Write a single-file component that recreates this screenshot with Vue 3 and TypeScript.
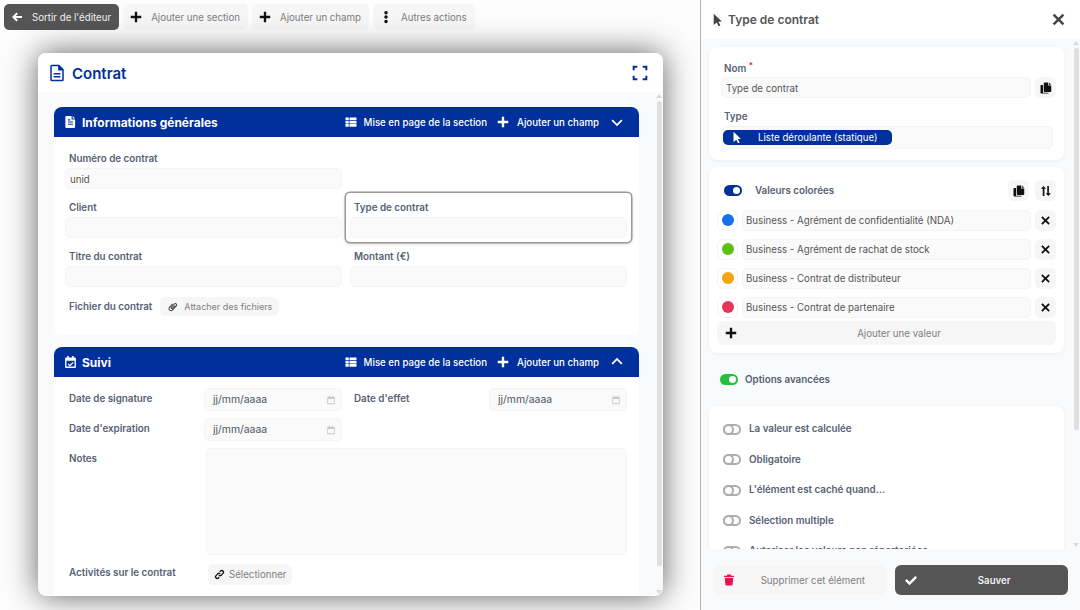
<script setup lang="ts">
import { h } from 'vue';
import type { FunctionalComponent } from 'vue';

// FontAwesome-like solid glyphs, drawn on a 24px box
const paths: Record<string, string> = {
  arrowLeft: 'M11 3l2.800 2.800L9.200 10H22v4H9.200l4.600 4.200L11 21 2 12z',
  plus: 'M10 3h4v7h7v4h-7v7h-4v-7H3v-4h7z',
  dots: 'M12 1.500a3 3 0 110 6 3 3 0 010-6zm0 7.500a3 3 0 110 6 3 3 0 010-6zm0 7.500a3 3 0 110 6 3 3 0 010-6z',
  fileLine: 'M5 1h10l6 6v14a2 2 0 01-2 2H5a2 2 0 01-2-2V3a2 2 0 012-2zm0 2v18h14V8.500h-5.500V3zM7.500 12h9v2h-9zm0 4h9v2h-9z',
  fileSolid: 'M4.500 1H14v6.500h6.500V21a2 2 0 01-2 2h-14a2 2 0 01-2-2V3a2 2 0 012-2zM16 1l4.500 4.500H16zM7.500 11v2h9v-2zm0 4v2h9v-2zm0-8v2h4V7z',
  table: 'M1 3h6.500v5.500H1zM9 3h14v5.500H9zM1 9.800h6.500v5H1zM9 9.800h14v5H9zM1 16h6.500v5.500H1zM9 16h14v5.500H9z',
  chevronDown: 'M3.500 7L12 15.300 20.500 7l2.500 2.600L12 20.500 1 9.600z',
  chevronUp: 'M3.500 17L12 8.700 20.500 17l2.500-2.600L12 3.500 1 14.400z',
  expand: 'M1 1h7v3H4v4H1zm15 0h7v7h-3V4h-4zM1 16h3v4h4v3H1zm19 0h3v7h-7v-3h4z',
  calendarCheck: 'M6 1h3v2.500h6V1h3v2.500h2A2 2 0 0122 5.500V21a2 2 0 01-2 2H4a2 2 0 01-2-2V5.500a2 2 0 012-2h2zM4.500 9.500V20.500h15V9.500zm11.900 2.300l1.500 1.500-7 7-4-4 1.500-1.500 2.500 2.500z',
  calendar: 'M7 2h2v2h6V2h2v2h3a1 1 0 011 1v16a1 1 0 01-1 1H4a1 1 0 01-1-1V5a1 1 0 011-1h3zM5 9.500V20h14V9.500z',
  paperclip: 'M17.500 2.500a4.500 4.500 0 013.400 7.500L11.500 20.200a6 6 0 01-8.800-8.100l7.600-8.300 1.800 1.600-7.600 8.300a3.500 3.500 0 005.200 4.700l9.300-10.200a2 2 0 00-2.900-2.700L8.700 13.800a.6.6 0 00.9.800l6.500-7.100 1.800 1.600-6.500 7.100a3 3 0 01-4.400-4L14.300 4a4.400 4.400 0 013.200-1.500z',
  link: 'M9.500 14.500a5 5 0 007.100 0l4-4a5 5 0 00-7.100-7.100l-1.700 1.700 2 2 1.700-1.700a2.200 2.200 0 013.100 3.100l-4 4a2.200 2.200 0 01-3.100 0zM14.500 9.500a5 5 0 00-7.100 0l-4 4a5 5 0 007.100 7.100l1.700-1.700-2-2-1.700 1.700a2.200 2.200 0 01-3.100-3.100l4-4a2.200 2.200 0 013.100 0z',
  pointer: 'M5 1.500l15 14.300-6.300.4 3.700 7.100-3.300 1.500-3.400-7.400L5 22z',
  copy: 'M9 1h7.500v6h6v11.500a1.500 1.500 0 01-1.500 1.500H9a1.500 1.500 0 01-1.500-1.500v-16A1.500 1.500 0 019 1zm9 0l4.500 4.500H18zM2.500 6H6v15.500h11v1.500H2.500A1.500 1.500 0 011 21.500v-14A1.500 1.500 0 012.500 6z',
  sort: 'M7 2l5 5.500H8.800V22H5.500V7.500H2zM14.500 2h3.300v14.500H22L16.500 22 11.500 16.500h3z',
  times: 'M5.500 2.700L12 9.200l6.500-6.500 2.800 2.800L14.800 12l6.500 6.500-2.800 2.800L12 14.800l-6.500 6.500-2.800-2.800L9.200 12 2.700 5.500z',
  check: 'M20.500 4L24 7.500 9 22.500 0 13.500 3.500 10 9 15.500z',
  trash: 'M8.500 1h7l1 2.500H22V6H2V3.500h5.500zM3.500 7.500h17l-1.300 14A1.700 1.700 0 0117.500 23h-11a1.700 1.700 0 01-1.700-1.500z'
};

const Icon: FunctionalComponent<{ name: string }> = ({ name }) =>
  h('svg', { viewBox: '0 0 24 24', class: 'icon', 'aria-hidden': 'true' }, [h('path', { d: paths[name] })]);

const toolbarActions = [
  { icon: 'plus', label: 'Ajouter une section' },
  { icon: 'plus', label: 'Ajouter un champ' },
  { icon: 'dots', label: 'Autres actions' }
];

const colorValues = [
  { color: '#1273eb', label: 'Business - Agrément de confidentialité (NDA)' },
  { color: '#5cbf14', label: 'Business - Agrément de rachat de stock' },
  { color: '#f5a30f', label: 'Business - Contrat de distributeur' },
  { color: '#e5345a', label: 'Business - Contrat de partenaire' }
];

const advancedOptions = [
  'La valeur est calculée',
  'Obligatoire',
  "L'élément est caché quand...",
  'Sélection multiple',
  'Autoriser les valeurs non répertoriées'
];
</script>

<template>
  <div class="page">
    <div class="editor">
      <div class="toolbar">
        <button class="tool tool-dark"><Icon name="arrowLeft" />Sortir de l'éditeur</button>
        <button v-for="action in toolbarActions" :key="action.label" class="tool">
          <Icon :name="action.icon" />{{ action.label }}
        </button>
      </div>

      <div class="form-card">
        <header class="form-head">
          <Icon name="fileLine" class="form-icon" />
          <h1>Contrat</h1>
          <Icon name="expand" class="expand" />
        </header>

        <div class="form-body">
          <section class="section">
            <div class="section-bar">
              <Icon name="fileSolid" class="bar-icon" />
              <h2>Informations générales</h2>
              <span class="bar-action"><Icon name="table" class="table-icon" />Mise en page de la section</span>
              <span class="bar-action"><Icon name="plus" />Ajouter un champ</span>
              <Icon name="chevronDown" class="bar-chevron" />
            </div>
            <div class="fields">
              <div class="field"><label>Numéro de contrat</label><div class="input">unid</div></div>
              <div class="field"></div>
              <div class="field"><label>Client</label><div class="input"></div></div>
              <div class="field selected"><label>Type de contrat</label><div class="input"></div></div>
              <div class="field"><label>Titre du contrat</label><div class="input"></div></div>
              <div class="field"><label>Montant (€)</label><div class="input"></div></div>
              <div class="file-row">
                <label>Fichier du contrat</label>
                <button class="attach"><Icon name="paperclip" />Attacher des fichiers</button>
              </div>
            </div>
          </section>

          <section class="section">
            <div class="section-bar">
              <Icon name="calendarCheck" class="bar-icon" />
              <h2>Suivi</h2>
              <span class="bar-action"><Icon name="table" class="table-icon" />Mise en page de la section</span>
              <span class="bar-action"><Icon name="plus" />Ajouter un champ</span>
              <Icon name="chevronUp" class="bar-chevron" />
            </div>
            <div class="fields fields-inline">
              <div class="inline"><label>Date de signature</label><div class="input date">jj/mm/aaaa<Icon name="calendar" /></div></div>
              <div class="inline"><label>Date d'effet</label><div class="input date">jj/mm/aaaa<Icon name="calendar" /></div></div>
              <div class="inline"><label>Date d'expiration</label><div class="input date">jj/mm/aaaa<Icon name="calendar" /></div></div>
              <div class="inline"></div>
              <div class="inline wide"><label>Notes</label><div class="input notes"></div></div>
              <div class="inline wide activities">
                <label>Activités sur le contrat</label>
                <button class="attach select"><Icon name="link" />Sélectionner</button>
              </div>
            </div>
          </section>

          <div class="scrollbar">
            <i class="arrow up"></i>
            <b class="thumb form-thumb"></b>
            <i class="arrow down"></i>
          </div>
        </div>
      </div>
    </div>

    <aside class="panel">
      <header class="panel-head">
        <Icon name="pointer" class="panel-pointer" />
        <h2>Type de contrat</h2>
        <Icon name="times" class="panel-close" />
      </header>

      <div class="panel-body">
        <div class="box box-main">
          <label>Nom <sup>*</sup></label>
          <div class="with-btn">
            <div class="input">Type de contrat</div>
            <button class="square"><Icon name="copy" /></button>
          </div>
          <label class="type-label">Type</label>
          <div class="type-select">
            <span class="chip"><Icon name="pointer" />Liste déroulante (statique)</span>
          </div>
        </div>

        <div class="box box-values">
          <div class="values-head">
            <span class="toggle on"></span>
            <label>Valeurs colorées</label>
            <button class="square"><Icon name="copy" /></button>
            <button class="square"><Icon name="sort" /></button>
          </div>
          <div v-for="value in colorValues" :key="value.label" class="value-row">
            <span class="swatch"><i :style="{ background: value.color }"></i></span>
            <div class="input">{{ value.label }}</div>
            <button class="square"><Icon name="times" /></button>
          </div>
          <button class="add-value"><Icon name="plus" /><span>Ajouter une valeur</span></button>
        </div>

        <div class="advanced"><span class="toggle green"></span><label>Options avancées</label></div>

        <div class="box box-options">
          <div v-for="option in advancedOptions" :key="option" class="option">
            <span class="toggle"></span><label>{{ option }}</label>
          </div>
        </div>

        <div class="scrollbar">
          <i class="arrow up"></i>
          <b class="thumb panel-thumb"></b>
          <i class="arrow down"></i>
        </div>
      </div>

      <footer class="panel-foot">
        <button class="foot-btn delete"><Icon name="trash" /><span>Supprimer cet élément</span></button>
        <button class="foot-btn save"><Icon name="check" /><span>Sauver</span></button>
      </footer>
    </aside>
  </div>
</template>

<style scoped>
.page {
  display: flex;
  width: 1080px;
  height: 610px;
  overflow: hidden;
  font-family: Inter, "Liberation Sans", sans-serif;
  font-size: 9.7px;
  color: #4b5563;
  background-color: #fdfdfd;
}

button {
  font-family: inherit;
  border: none;
  cursor: pointer;
}

.icon {
  width: 10px;
  height: 10px;
  fill: currentColor;
  flex: none;
}

label {
  font-weight: 600;
  font-size: 9.8px;
  line-height: 14px;
  color: #566173;
}

/* Left side */
.editor {
  width: 700px;
  flex: none;
  display: flex;
  flex-direction: column;
}

.toolbar {
  display: flex;
  gap: 4px;
  padding: 4px;
}

.tool {
  display: flex;
  align-items: center;
  gap: 8px;
  height: 26px;
  padding: 0 8px 0 6px;
  border-radius: 5px;
  background: #f6f6f6;
  color: #7d7d7d;
  font-size: 9.7px;
}

.tool .icon {
  color: #111;
  width: 14px;
  height: 14px;
}

.tool-dark {
  gap: 9px;
  padding-left: 7px;
  background: #555;
  color: #f2f2f2;
}

.tool-dark .icon {
  color: #fff;
  width: 12px;
  height: 12px;
}

.form-card {
  margin: 19px 37px 14px 38px;
  width: 625px;
  height: 543px;
  border-radius: 8px;
  overflow: hidden;
  background: #f8fafc;
  box-shadow: 0 0 32px rgba(0, 0, 0, 0.62);
  display: flex;
  flex-direction: column;
}

.form-head {
  height: 39px;
  flex: none;
  display: flex;
  align-items: center;
  padding: 0 15px 0 10px;
  background: #fff;
  color: #00309b;
}

.form-head h1 {
  flex: 1;
  margin: 1px 0 0 6px;
  font-size: 15px;
  font-weight: 600;
}

.form-icon {
  width: 18px;
  height: 18px;
}

.expand {
  width: 16px;
  height: 16px;
}

.form-body {
  position: relative;
  flex: 1;
  min-height: 0;
  overflow: hidden;
  padding: 15px 16px 0;
  display: flex;
  flex-direction: column;
  gap: 12px;
}

.section {
  flex: none;
  width: 585px;
}

.section-bar {
  display: flex;
  align-items: center;
  height: 30px;
  padding: 0 16px 0 10px;
  border-radius: 8px 8px 0 0;
  background: #00309b;
  color: #fff;
}

.section-bar h2 {
  flex: 1;
  margin: 0 0 0 5px;
  font-size: 12px;
  font-weight: 700;
}

.bar-icon {
  width: 13px;
  height: 14px;
}

.bar-action {
  display: flex;
  align-items: center;
  gap: 7px;
  margin-right: 9px;
  font-size: 9.7px;
  font-weight: 500;
}

.bar-action .icon {
  width: 14px;
  height: 14px;
}

.bar-action .table-icon {
  width: 12px;
  height: 12px;
}

.bar-chevron {
  width: 12px;
  height: 12px;
  margin-left: 3px;
}

.fields {
  display: grid;
  grid-template-columns: 285px 285px;
  padding: 7px 8px 19px 7px;
  background: #fff;
  border-radius: 0 0 8px 8px;
}

.field {
  display: flex;
  flex-direction: column;
  box-sizing: border-box;
  height: 49px;
  padding: 8px 4px 4px 4px;
  border-radius: 4px;
}

.field label {
  margin: 0 0 2px 4px;
}

.field.selected {
  box-shadow: 0 0 0 1.5px #9a9a9a, 0 1px 4px rgba(0, 0, 0, 0.25);
}

.input {
  display: flex;
  align-items: center;
  height: 21px;
  padding: 1px 4px 0;
  border: 1px solid #f4f4f5;
  border-radius: 5px;
  background: #fafafa;
  color: #555;
  font-size: 9.7px;
  box-sizing: border-box;
}

.file-row {
  grid-column: 1 / -1;
  display: flex;
  align-items: center;
  gap: 8px;
  margin-top: 6px;
  padding-left: 8px;
}

.attach {
  display: flex;
  align-items: center;
  gap: 6px;
  height: 19px;
  padding: 0 7px 0 8px;
  border-radius: 6px;
  background: #f6f6f6;
  color: #808080;
  font-size: 9px;
}

.attach .icon {
  color: #444;
  width: 10px;
  height: 10px;
}

.fields-inline {
  padding-top: 11px;
  padding-bottom: 26px;
}

.inline {
  display: grid;
  grid-template-columns: 139px 1fr;
  box-sizing: border-box;
  height: 23px;
  margin-bottom: 7px;
  padding: 0 4px;
}

.inline label {
  padding: 4px 0 0 4px;
}

.inline .date {
  height: 23px;
  padding: 0 5px 0 8px;
  justify-content: space-between;
  font-size: 10.4px;
  color: #4b5563;
}

.date .icon {
  color: #c9c9c9;
}

.wide {
  grid-column: 1 / -1;
  grid-template-columns: 141px 1fr;
  height: auto;
}

.notes {
  height: 107px;
}

.activities {
  margin-top: 2px;
  margin-bottom: 0;
}

.activities label {
  padding-top: 2px;
}

.select {
  justify-self: start;
  gap: 4px;
  height: 21px;
  margin-left: 2px;
  padding: 0 6px;
  font-size: 9.7px;
}

.select .icon {
  color: #111;
  width: 11px;
  height: 11px;
}

/* Right side */
.panel {
  flex: 1;
  min-width: 0;
  display: flex;
  flex-direction: column;
  background: #f8fafc;
  border-left: 1px solid #b5b5b5;
}

.panel-head {
  height: 39px;
  flex: none;
  display: flex;
  align-items: center;
  padding: 0 14px 0 10px;
  background: #fff;
}

.panel-head h2 {
  flex: 1;
  margin: 0 0 0 4px;
  font-size: 12px;
  font-weight: 600;
  color: #555;
}

.panel-pointer {
  width: 13px;
  height: 13px;
  color: #444;
}

.panel-close {
  width: 15px;
  height: 15px;
  color: #444;
}

.panel-body {
  position: relative;
  flex: 1;
  min-height: 0;
  overflow: hidden;
  padding: 8px 8px 0 8px;
}

.box {
  width: 355px;
  background: #fff;
  border-radius: 8px;
  box-sizing: border-box;
  box-shadow: 0 1px 4px rgba(15, 23, 42, 0.05);
}

.box-main {
  height: 113px;
  padding: 15px 8px 0 12px;
}

.box-main > label {
  display: block;
  padding-left: 3px;
}

sup {
  color: #e11d2e;
  font-size: 8px;
  line-height: 0;
}

.with-btn {
  display: flex;
  gap: 4px;
  margin-top: 1px;
}

.with-btn .input {
  flex: 1;
}

.square {
  width: 21px;
  height: 21px;
  flex: none;
  padding: 0;
  display: flex;
  align-items: center;
  justify-content: center;
  border-radius: 6px;
  background: #f6f6f6;
  color: #111;
}

.square .icon {
  width: 12px;
  height: 12px;
}

.box-main .type-label {
  margin-top: 12px;
}

.type-select {
  display: flex;
  align-items: center;
  height: 23px;
  margin-top: 2px;
  padding: 0 1px;
  border-radius: 5px;
  background: #fafafa;
  border: 1px solid #f4f4f5;
  box-sizing: border-box;
  width: 332px;
}

.chip {
  display: flex;
  align-items: center;
  gap: 15px;
  width: 169px;
  height: 15px;
  box-sizing: border-box;
  padding-left: 8px;
  border-radius: 5px;
  background: #00309b;
  color: #fff;
  font-size: 9.7px;
}

.chip .icon {
  width: 12px;
  height: 12px;
  margin-top: -1px;
}

.box-values {
  margin-top: 7px;
  height: 186px;
  padding: 13px 8px 0;
}

.values-head {
  display: flex;
  align-items: center;
  gap: 6px;
  padding-left: 7px;
  margin-bottom: 8px;
}

.values-head label {
  flex: 1;
  margin: 1px 0 0 7px;
}

.toggle {
  position: relative;
  width: 18px;
  height: 11px;
  flex: none;
  box-sizing: border-box;
  border-radius: 6px;
  border: 2px solid #adadad;
  background: #fff;
}

.toggle::after {
  content: '';
  position: absolute;
  top: -2px;
  left: -2px;
  width: 11px;
  height: 11px;
  box-sizing: border-box;
  border-radius: 50%;
  border: 2px solid #adadad;
  background: #fff;
}

.toggle.on {
  background: #00309b;
  border-color: #00309b;
}

.toggle.green {
  background: #22c03c;
  border-color: #22c03c;
}

.toggle.on::after,
.toggle.green::after {
  left: auto;
  right: 0;
  top: 0;
  width: 7px;
  height: 7px;
  border: none;
}

.value-row {
  display: flex;
  align-items: center;
  gap: 4px;
  height: 22px;
  margin-bottom: 7px;
}

.value-row .input {
  flex: 1;
  height: 21px;
  padding: 1px 3px 0;
}

.value-row .square .icon {
  width: 11px;
  height: 11px;
}

.swatch {
  width: 21px;
  height: 21px;
  flex: none;
  display: flex;
  align-items: center;
  justify-content: center;
  box-sizing: border-box;
  border: 1px solid #f4f4f5;
  border-radius: 6px;
}

.swatch i {
  width: 12px;
  height: 12px;
  border-radius: 50%;
}

.add-value {
  display: flex;
  align-items: center;
  width: 339px;
  height: 24px;
  margin-top: -4px;
  padding: 0 9px 0 7px;
  border-radius: 6px;
  background: #f6f6f6;
  color: #808080;
  font-size: 9.7px;
}

.add-value .icon {
  color: #111;
  width: 14px;
  height: 14px;
}

.add-value span {
  flex: 1;
  padding-left: 13px;
  text-align: center;
}

.advanced {
  display: flex;
  align-items: center;
  gap: 7px;
  height: 20px;
  margin: 16px 0 17px 11px;
}

.advanced label {
  margin-top: 1px;
}

.box-options {
  padding: 8px 14px 6px;
}

.option {
  display: flex;
  align-items: center;
  gap: 8px;
  height: 30.5px;
}

.panel-foot {
  height: 61px;
  flex: none;
  display: flex;
  align-items: center;
  gap: 8px;
  padding: 0 12px;
  background: #f8fafc;
}

.foot-btn {
  flex: 1 1 0;
  min-width: 0;
  display: flex;
  align-items: center;
  height: 30px;
  padding: 0 10px;
  border-radius: 6px;
  font-size: 9.7px;
}

.foot-btn span {
  flex: 1;
  padding: 1px 0 0 14px;
  text-align: center;
}

.foot-btn .icon {
  width: 12px;
  height: 12px;
}

.delete {
  background: #f6f6f6;
  color: #808080;
}

.delete .icon {
  color: #ee1150;
}

.save {
  background: #555;
  color: #f2f2f2;
  font-weight: 600;
}

.save .icon {
  color: #fff;
}

/* Drawn scrollbars, they sit over the right edge of both scroll areas */
.scrollbar {
  position: absolute;
  top: 0;
  right: 0;
  bottom: 0;
  width: 8px;
  display: flex;
  flex-direction: column;
  align-items: center;
  padding: 2px 0;
  box-sizing: border-box;
}

.arrow {
  flex: none;
  width: 0;
  height: 0;
  border-left: 3px solid transparent;
  border-right: 3px solid transparent;
}

.arrow.up {
  border-bottom: 4px solid #d8d8d8;
}

.arrow.down {
  margin-top: auto;
  border-top: 4px solid #d8d8d8;
}

.thumb {
  flex: none;
  width: 5px;
  margin-top: 3px;
  border-radius: 3px;
  background: #dfdfdf;
}

.form-thumb {
  height: 465px;
}

.panel-thumb {
  height: 382px;
}
</style>
